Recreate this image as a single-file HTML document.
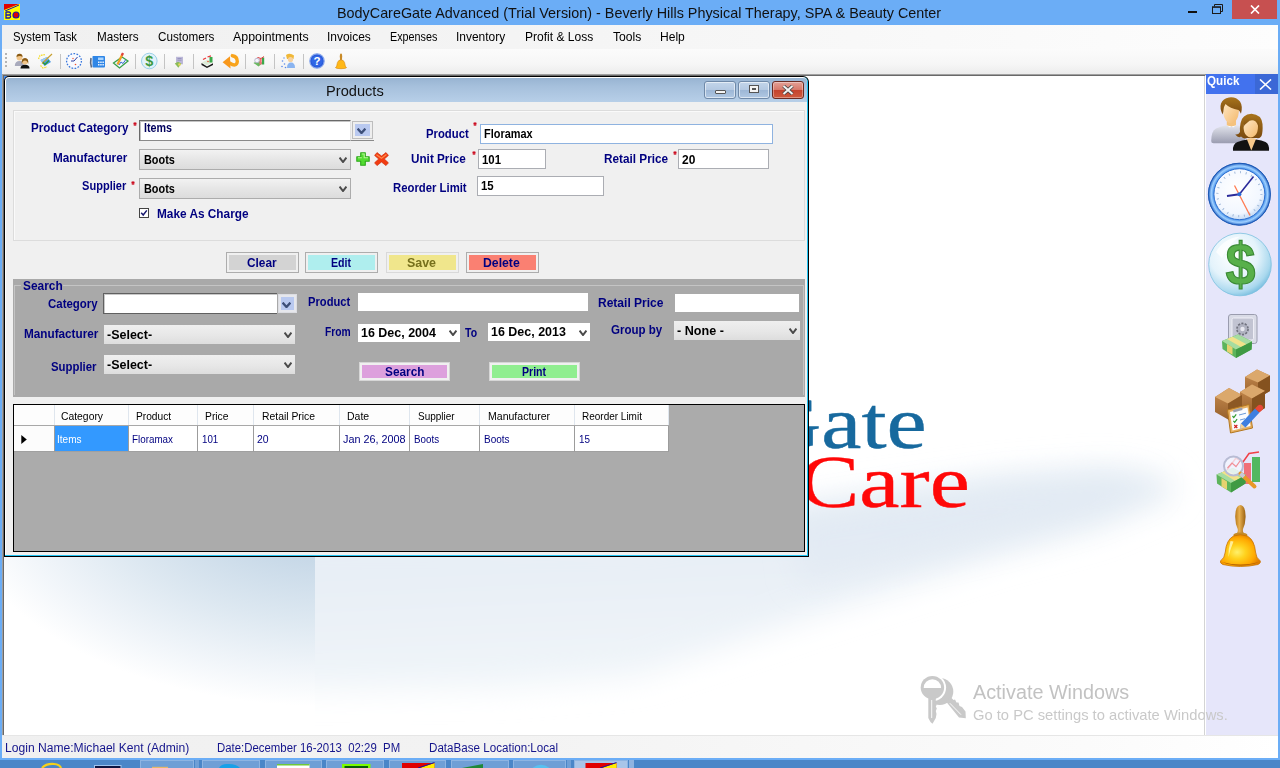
<!DOCTYPE html>
<html lang="en"><head><meta charset="utf-8"><title>BodyCareGate Advanced</title>
<style>

*{box-sizing:border-box}
html,body{margin:0;padding:0}
body{width:1280px;height:768px;overflow:hidden;position:relative;background:#6badf6;font-family:"Liberation Sans",sans-serif;}
.a{position:absolute}
.t{position:absolute;white-space:pre;line-height:1.2;z-index:20;transform-origin:0 0}
#menubar{left:2px;top:25px;width:1276px;height:24px;background:linear-gradient(90deg,#f0f0f0 0,#f4f4f4 40%,#fdfdfd 100%)}
#toolbar{left:2px;top:49px;width:1276px;height:25px;background:linear-gradient(180deg,#fbfbfb 0,#f6f6f6 60%,#ececec 100%)}
#mdi{left:2px;top:74px;width:1204px;height:661px;background:#fff;border-left:2px solid #696969;border-top:2px solid #696969;border-right:1px solid #fff;box-shadow:inset -1px 0 0 #d4d4d4;overflow:hidden}
#mdib{left:2px;top:74px;width:1203px;height:661px;border-left:1px solid #a0a0a0;border-top:1px solid #a0a0a0;z-index:2;pointer-events:none}
#status{left:2px;top:735px;width:1276px;height:23px;background:linear-gradient(90deg,#f0f0f0 0,#f2f2f2 35%,#fbfbfb 85%,#ffffff 100%);border-top:1px solid #e6e6e6}
#taskbar{left:0;top:760px;width:1280px;height:8px;background:#4a86c8;overflow:hidden}
.tsep{position:absolute;top:54px;width:1px;height:15px;background:#c4c4c4}
/* child window */
#win{left:4px;top:76px;width:805px;height:481px;background:#000;border-radius:5px 6px 0 0;z-index:5}
#win .cy{left:1px;top:1px;right:1px;bottom:1px;background:#21c3f2;border-radius:6px 6px 0 0}
#win .in{left:2px;top:2px;right:2px;bottom:2px;background:#f0f0f0;border-radius:3px 4px 0 0;overflow:hidden}
#cap{left:0;top:0;right:0;height:24px;background:linear-gradient(180deg,#98b4d2 0,#a6c0dc 35%,#b7cfe8 100%)}
.cbtn{position:absolute;top:4px;height:18px;border:1px solid #6f89a8;border-radius:3px;background:linear-gradient(180deg,#c3d5ea 0,#b4c9e2 48%,#9db7d6 52%,#b0c8e3 100%);box-shadow:inset 0 0 0 1px rgba(255,255,255,.55)}
.cbtn.x{border-color:#6b2b22;background:linear-gradient(180deg,#e3a197 0,#d8796a 48%,#c4432d 52%,#cf5a3d 100%);box-shadow:inset 0 0 0 1px rgba(255,255,255,.35)}
.tb{position:absolute;background:#fff;border:1px solid #abadb3;z-index:6}
.cmb{position:absolute;border:1px solid #acacac;background:linear-gradient(180deg,#f2f2f2 0,#e6e6e6 50%,#dcdcdc 100%);z-index:6}
.cmb2{position:absolute;background:linear-gradient(180deg,#efefef 0,#e7e7e7 55%,#dddddd 100%);z-index:6}
.btn{position:absolute;border:1px solid #adadad;background:#f0f0f0;z-index:6}
.btn i{position:absolute;left:2px;top:2px;right:2px;bottom:2px}
.chev{position:absolute;z-index:7}

#win .hl{left:1px;top:1px;right:1px;bottom:1px;border-radius:4px 5px 0 0;background:#fff;border-right:1px solid #21c3f2;border-bottom:1px solid #21c3f2}

</style></head>
<body>

<div class="a" id="titlebar" style="left:0;top:0;width:1280px;height:25px">
 <svg class="a" style="left:4px;top:4px" width="16" height="16" viewBox="0 0 16 16">
  <rect width="16" height="16" fill="#ffff00"/><path d="M0 0H15L0 6Z" fill="#e00000"/>
  <path d="M1 7L15 1" stroke="#1a1aa0" stroke-width="1"/>
  <path d="M2 8V14H5.5A1.6 1.6 0 0 0 5.5 11H2M2 11H5A1.5 1.5 0 0 0 5 8H2" fill="none" stroke="#1a1aa0" stroke-width="1.3"/>
  <circle cx="12" cy="11" r="3" fill="#e00000" stroke="#1a1aa0" stroke-width="1.2"/>
 </svg>
 <div class="a" style="left:1188px;top:11px;width:9px;height:2px;background:#111"></div>
 <svg class="a" style="left:1212px;top:4px" width="12" height="11" viewBox="0 0 12 11"><path d="M2.5 2.5V0.5H10.5V7.5H8.5" fill="none" stroke="#1a1a1a" stroke-width="1"/><rect x="0.5" y="3" width="8" height="6.5" fill="none" stroke="#1a1a1a" stroke-width="1"/><rect x="0" y="2.5" width="9" height="1.2" fill="#1a1a1a"/></svg>
 <div class="a" style="left:1232px;top:0;width:45px;height:19px;background:#c75050"></div>
 <svg class="a" style="left:1250px;top:5px" width="10" height="9" viewBox="0 0 10 9"><path d="M1 0.5L9 8.5M9 0.5L1 8.5" stroke="#fff" stroke-width="1.7"/></svg>
</div>
<div class="a" id="menubar"></div>
<div class="a" id="mdib"></div>
<div class="a" id="toolbar"></div>
<div class="a" id="status"></div>
<div class="a" id="taskbar"></div>

<div class="a" id="mdi">
<svg class="a" style="left:-4px;top:-76px" width="1280" height="768" viewBox="0 0 1280 768">
 <defs>
  <filter id="bl2" x="-10%" y="-30%" width="120%" height="160%"><feGaussianBlur stdDeviation="15"/></filter>
  <radialGradient id="gL" cx="0" cy="0" r="1" gradientUnits="userSpaceOnUse" gradientTransform="translate(325 492) scale(370 214)">
   <stop offset="0" stop-color="#bdd2e4"/><stop offset="0.32" stop-color="#c8d9e8"/><stop offset="0.6" stop-color="#dde8f1"/><stop offset="0.85" stop-color="#f2f6fa"/><stop offset="1" stop-color="#ffffff"/>
  </radialGradient>
  <linearGradient id="gW" x1="0" y1="0" x2="0.18" y2="1"><stop offset="0" stop-color="#e3ecf4"/><stop offset="0.5" stop-color="#e8eff6"/><stop offset="1" stop-color="#f0f5f9"/></linearGradient>
  <clipPath id="cR"><rect x="315" y="76" width="889" height="659"/></clipPath>
 </defs>
 <g clip-path="url(#cR)">
  <g filter="url(#bl2)"><path d="M260 530 L640 535 L800 503 L1000 476 L1100 468 L1165 476 L1178 494 L1100 528 L1000 555 L800 620 L640 676 L500 688 L260 690Z" fill="url(#gW)"/></g>
  <g filter="url(#bl2)"><path d="M790 515 L1000 482 L1120 474 L1160 486 L1090 515 L1000 540 L800 585Z" fill="#dde8f2" opacity="0.5"/></g>
 </g>
 <rect x="4" y="400" width="311" height="340" fill="url(#gL)"/>
</svg>
</div>
<div class="a" style="left:4px;top:76px;width:4px;height:4px;background:#4a90f0;z-index:4"></div>
<div class="a" id="win">
 <div class="a hl"></div>
 <div class="a in"><div class="a" id="cap"></div></div>
</div>
<div class="cbtn" style="left:704px;top:81px;width:32px;height:18px;z-index:6"><div class="a" style="left:10px;top:8px;width:11px;height:4px;background:#f4f4f4;border:1px solid #555;border-radius:1px"></div></div>
<div class="cbtn" style="left:738px;top:81px;width:32px;height:18px;z-index:6"><div class="a" style="left:10px;top:3px;width:10px;height:8px;background:#f4f4f4;border:1px solid #555"><div class="a" style="left:2px;top:2px;width:4px;height:2px;border:1px solid #555;background:#9db7d6"></div></div></div>
<div class="cbtn x" style="left:772px;top:81px;width:32px;height:18px;z-index:6"><svg class="a" style="left:9px;top:3px" width="12" height="10" viewBox="0 0 12 10"><path d="M1.5 1L10.5 9M10.5 1L1.5 9" stroke="#444" stroke-width="3.6"/><path d="M1.5 1L10.5 9M10.5 1L1.5 9" stroke="#f4f4f4" stroke-width="2"/></svg></div>
<div class="a" style="left:13px;top:110px;width:792px;height:131px;border:1px solid #dcdcdc;z-index:6;box-shadow:inset 1px 1px 0 #fafafa"></div>
<div class="a" style="left:139px;top:120px;width:212px;height:21px;background:#fff;border:1px solid #e3e3e3;border-top-color:#696969;border-left-color:#696969;border-bottom-color:#8a8a8a;z-index:6;box-shadow:inset 1px 1px 0 #c4c4c4"></div>
<div class="a" style="left:351px;top:140px;width:23px;height:1px;background:#8a8a8a;z-index:6"></div>
<div class="a" style="left:352px;top:121px;width:21px;height:18px;background:#eeeeee;border:1px solid #bdbdbd;z-index:6"><div class="a" style="left:2px;top:2px;right:2px;bottom:2px;background:#b9c9f0"></div></div>
<svg class="chev" style="left:357px;top:128px" width="9" height="6" viewBox="0 0 9 6"><path d="M0.6 0.6 L4.5 5 L8.4 0.6" fill="none" stroke="#3d4f78" stroke-width="2.3"/></svg>
<svg class="a" style="left:133px;top:121.5px;z-index:7" width="4" height="4" viewBox="0 0 4 4"><path d="M2 0.300V3.700M0.500 1.100L3.500 2.900M3.500 1.100L0.500 2.900" stroke="#cc0c20" stroke-width="1.200"/></svg>
<svg class="a" style="left:130.5px;top:180.5px;z-index:7" width="4" height="4" viewBox="0 0 4 4"><path d="M2 0.300V3.700M0.500 1.100L3.500 2.900M3.500 1.100L0.500 2.900" stroke="#cc0c20" stroke-width="1.200"/></svg>
<svg class="a" style="left:473px;top:121.5px;z-index:7" width="4" height="4" viewBox="0 0 4 4"><path d="M2 0.300V3.700M0.500 1.100L3.500 2.900M3.500 1.100L0.500 2.900" stroke="#cc0c20" stroke-width="1.200"/></svg>
<svg class="a" style="left:471.5px;top:151px;z-index:7" width="4" height="4" viewBox="0 0 4 4"><path d="M2 0.300V3.700M0.500 1.100L3.500 2.900M3.500 1.100L0.500 2.900" stroke="#cc0c20" stroke-width="1.200"/></svg>
<svg class="a" style="left:673px;top:150.5px;z-index:7" width="4" height="4" viewBox="0 0 4 4"><path d="M2 0.300V3.700M0.500 1.100L3.500 2.900M3.500 1.100L0.500 2.900" stroke="#cc0c20" stroke-width="1.200"/></svg>
<div class="cmb" style="left:139px;top:149px;width:212px;height:21px;"></div>
<svg class="chev" style="left:338.5px;top:157px" width="8" height="6" viewBox="0 0 8 6"><path d="M0.6 0.6 L4.0 5 L7.4 0.6" fill="none" stroke="#4a4a4a" stroke-width="2"/></svg>
<div class="cmb" style="left:139px;top:178px;width:212px;height:21px;"></div>
<svg class="chev" style="left:338.5px;top:185.7px" width="8" height="6" viewBox="0 0 8 6"><path d="M0.6 0.6 L4.0 5 L7.4 0.6" fill="none" stroke="#4a4a4a" stroke-width="2"/></svg>
<svg class="a" style="left:356px;top:152px;z-index:7" width="14" height="14" viewBox="0 0 14 14"><path d="M4.700 0.800H9.300V4.700H13.200V9.300H9.300V13.200H4.700V9.300H0.800V4.700H4.700Z" fill="#52dc30" stroke="#2fa81c" stroke-width="1.100" stroke-linejoin="round"/><path d="M5.800 2H8.200V5.800H12 M2 5.800H5.800" fill="none" stroke="#b4f594" stroke-width="1.100"/></svg>
<svg class="a" style="left:374px;top:152px;z-index:7" width="15" height="14" viewBox="0 0 15 14"><path d="M3 0.600L7.500 4L12 0.600L14.400 3.400L10.300 7L14.400 10.800L12 13.600L7.500 10L3 13.600L0.600 10.800L4.700 7L0.600 3.400Z" fill="#f23c12" stroke="#d02c08" stroke-width="0.700" stroke-linejoin="round"/><path d="M2.500 2.800L7.500 6.300L12.400 2.600" fill="none" stroke="#ff8a4a" stroke-width="1.200"/></svg>
<div class="a" style="left:139px;top:208px;width:10px;height:10px;background:#fff;border:1px solid #444;z-index:6"><svg class="a" style="left:0;top:0" width="8" height="8" viewBox="0 0 8 8"><path d="M1.2 3.8L3.2 6L6.8 1.4" fill="none" stroke="#1a1a70" stroke-width="1.5"/></svg></div>
<div class="tb" style="left:480px;top:124px;width:293px;height:20px;border-color:#8fb3e0"></div>
<div class="tb" style="left:478px;top:149px;width:68px;height:20px;"></div>
<div class="tb" style="left:678px;top:149px;width:91px;height:20px;"></div>
<div class="tb" style="left:477px;top:176px;width:127px;height:20px;"></div>
<div class="btn" style="left:226px;top:252px;width:73px;height:21px;border-color:#adadad"><i style="background:#d3d3d3;left:2px;top:2px;right:2px;bottom:2px"></i></div>
<div class="btn" style="left:305px;top:252px;width:73px;height:21px;border-color:#adadad"><i style="background:#afeeee;left:2px;top:2px;right:2px;bottom:2px"></i></div>
<div class="btn" style="left:386px;top:252px;width:73px;height:21px;border-color:#d9d9d9"><i style="background:#f0e68c;left:2px;top:2px;right:2px;bottom:2px"></i></div>
<div class="btn" style="left:466px;top:252px;width:73px;height:21px;border-color:#adadad"><i style="background:#fa8072;left:2px;top:2px;right:2px;bottom:2px"></i></div>
<div class="a" style="left:13px;top:279px;width:792px;height:118px;background:#a9a9a9;z-index:6"></div>
<div class="a" style="left:14px;top:285px;width:790px;height:110px;border:1px solid #c4c4c4;border-bottom:none;z-index:6"></div>
<div class="a" style="left:21px;top:283px;width:42px;height:6px;background:#a9a9a9;z-index:6"></div>
<div class="a" style="left:103px;top:293px;width:174px;height:21px;background:#fff;border:1px solid #606060;border-right:none;z-index:6;box-shadow:inset 1px 1px 0 #c8c8c8"></div>
<div class="a" style="left:278px;top:294px;width:19px;height:19px;background:#e6e7ec;border:1px solid #dcdde2;z-index:6"><div class="a" style="left:2px;top:2px;right:2px;bottom:2px;background:#b9c9f0"></div></div>
<svg class="chev" style="left:282px;top:301.7px" width="9" height="6" viewBox="0 0 9 6"><path d="M0.6 0.6 L4.5 5 L8.4 0.6" fill="none" stroke="#3d4f78" stroke-width="2.3"/></svg>
<div class="cmb2" style="left:104px;top:325px;width:191px;height:19px;"></div>
<svg class="chev" style="left:283.7px;top:332.3px" width="8" height="6" viewBox="0 0 8 6"><path d="M0.6 0.6 L4.0 5 L7.4 0.6" fill="none" stroke="#4a4a4a" stroke-width="2"/></svg>
<div class="cmb2" style="left:104px;top:355px;width:191px;height:19px;"></div>
<svg class="chev" style="left:283.7px;top:362.3px" width="8" height="6" viewBox="0 0 8 6"><path d="M0.6 0.6 L4.0 5 L7.4 0.6" fill="none" stroke="#4a4a4a" stroke-width="2"/></svg>
<div class="a" style="left:358px;top:293px;width:230px;height:18px;background:#fff;z-index:6"></div>
<div class="a" style="left:358px;top:324px;width:102px;height:18px;background:#fff;z-index:6"></div>
<svg class="chev" style="left:448.5px;top:330.3px" width="8" height="6" viewBox="0 0 8 6"><path d="M0.6 0.6 L4.0 5 L7.4 0.6" fill="none" stroke="#4a4a4a" stroke-width="2"/></svg>
<div class="a" style="left:488px;top:323px;width:102px;height:18px;background:#fff;z-index:6"></div>
<svg class="chev" style="left:578.5px;top:329.5px" width="8" height="6" viewBox="0 0 8 6"><path d="M0.6 0.6 L4.0 5 L7.4 0.6" fill="none" stroke="#4a4a4a" stroke-width="2"/></svg>
<div class="a" style="left:675px;top:294px;width:124px;height:18px;background:#fff;z-index:6"></div>
<div class="cmb2" style="left:674px;top:321px;width:126px;height:19px;"></div>
<svg class="chev" style="left:788.8px;top:327.5px" width="8" height="6" viewBox="0 0 8 6"><path d="M0.6 0.6 L4.0 5 L7.4 0.6" fill="none" stroke="#4a4a4a" stroke-width="2"/></svg>
<div class="btn" style="left:359px;top:362px;width:91px;height:19px;border-color:#d6d6d6"><i style="background:#dda0dd;left:2px;top:2px;right:2px;bottom:2px"></i></div>
<div class="btn" style="left:489px;top:362px;width:91px;height:19px;border-color:#d6d6d6"><i style="background:#90ee90;left:2px;top:2px;right:2px;bottom:2px"></i></div>
<div class="a" style="left:13px;top:404px;width:792px;height:148px;background:#ababab;border:1px solid #000;z-index:6"></div>
<div class="a" style="left:14px;top:405px;width:655px;height:21px;background:#fdfdfd;z-index:6;border-bottom:1px solid #a8a8a8"></div>
<div class="a" style="left:14px;top:426px;width:655px;height:26px;background:#fff;z-index:6;border-bottom:1px solid #a0a0a0"></div>
<div class="a" style="left:14px;top:426px;width:40px;height:26px;background:#fcfcfc;z-index:6;border-bottom:1px solid #a0a0a0"></div>
<div class="a" style="left:55px;top:426px;width:73px;height:25px;background:#3399ff;z-index:7"></div>
<div class="a" style="left:54px;top:405px;width:1px;height:20px;background:#dfe6ee;z-index:7"></div>
<div class="a" style="left:54px;top:426px;width:1px;height:26px;background:#9c9c9c;z-index:7"></div>
<div class="a" style="left:128px;top:405px;width:1px;height:20px;background:#dfe6ee;z-index:7"></div>
<div class="a" style="left:128px;top:426px;width:1px;height:26px;background:#9c9c9c;z-index:7"></div>
<div class="a" style="left:197px;top:405px;width:1px;height:20px;background:#dfe6ee;z-index:7"></div>
<div class="a" style="left:197px;top:426px;width:1px;height:26px;background:#9c9c9c;z-index:7"></div>
<div class="a" style="left:253px;top:405px;width:1px;height:20px;background:#dfe6ee;z-index:7"></div>
<div class="a" style="left:253px;top:426px;width:1px;height:26px;background:#9c9c9c;z-index:7"></div>
<div class="a" style="left:339px;top:405px;width:1px;height:20px;background:#dfe6ee;z-index:7"></div>
<div class="a" style="left:339px;top:426px;width:1px;height:26px;background:#9c9c9c;z-index:7"></div>
<div class="a" style="left:409px;top:405px;width:1px;height:20px;background:#dfe6ee;z-index:7"></div>
<div class="a" style="left:409px;top:426px;width:1px;height:26px;background:#9c9c9c;z-index:7"></div>
<div class="a" style="left:479px;top:405px;width:1px;height:20px;background:#dfe6ee;z-index:7"></div>
<div class="a" style="left:479px;top:426px;width:1px;height:26px;background:#9c9c9c;z-index:7"></div>
<div class="a" style="left:574px;top:405px;width:1px;height:20px;background:#dfe6ee;z-index:7"></div>
<div class="a" style="left:574px;top:426px;width:1px;height:26px;background:#9c9c9c;z-index:7"></div>
<div class="a" style="left:668px;top:405px;width:1px;height:20px;background:#dfe6ee;z-index:7"></div>
<div class="a" style="left:668px;top:426px;width:1px;height:26px;background:#9c9c9c;z-index:7"></div>
<svg class="a" style="left:20.500px;top:435.300px;z-index:8" width="6" height="9" viewBox="0 0 6 9"><path d="M0.300 0L5.800 4.500L0.300 9Z" fill="#000"/></svg><div class="a" style="left:1206px;top:74px;width:72px;height:661px;background:#e6e6fa;z-index:4"></div>
<div class="a" style="left:1206px;top:74px;width:72px;height:20px;background:#4272ee;z-index:4"></div>
<div class="a" style="left:1255px;top:74px;width:23px;height:20px;background:#3b68d6;z-index:4"></div>
<svg class="a" style="left:1259px;top:79px;z-index:5" width="13" height="11" viewBox="0 0 13 11"><path d="M1 0.5L12 10.5M12 0.5L1 10.5" stroke="#fff" stroke-width="1.6"/></svg>
<svg class="a" style="left:1206px;top:94px;z-index:5" width="72" height="500" viewBox="1206 94 72 500">
<defs>
 <linearGradient id="hair" x1="0" y1="0" x2="0" y2="1"><stop offset="0" stop-color="#a8741c"/><stop offset="1" stop-color="#7a4a10"/></linearGradient>
 <linearGradient id="skin" x1="0" y1="0" x2="1" y2="1"><stop offset="0" stop-color="#ffe9c8"/><stop offset="1" stop-color="#f3b86a"/></linearGradient>
 <linearGradient id="shirt" x1="0" y1="0" x2="0" y2="1"><stop offset="0" stop-color="#e4e6ee"/><stop offset="1" stop-color="#9a9cb0"/></linearGradient>
 <radialGradient id="ring" cx="0.5" cy="0.5" r="0.5"><stop offset="0.8" stop-color="#3d8be8"/><stop offset="0.9" stop-color="#9fd0ff"/><stop offset="1" stop-color="#1a5cc0"/></radialGradient>
 <radialGradient id="face" cx="0.45" cy="0.4" r="0.6"><stop offset="0" stop-color="#ffffff"/><stop offset="0.8" stop-color="#f2f7ff"/><stop offset="1" stop-color="#c8dcf4"/></radialGradient>
 <radialGradient id="bub" cx="0.4" cy="0.35" r="0.7"><stop offset="0" stop-color="#ffffff"/><stop offset="0.55" stop-color="#e4f3fb"/><stop offset="0.85" stop-color="#a9d8ee"/><stop offset="1" stop-color="#6fb9dc"/></radialGradient>
 <radialGradient id="bell" cx="0.42" cy="0.55" r="0.6"><stop offset="0" stop-color="#fff06a"/><stop offset="0.35" stop-color="#ffd21e"/><stop offset="0.75" stop-color="#ffa800"/><stop offset="1" stop-color="#e07e00"/></radialGradient>
 <linearGradient id="wood" x1="0" y1="0" x2="1" y2="0"><stop offset="0" stop-color="#b87818"/><stop offset="0.4" stop-color="#e8b050"/><stop offset="1" stop-color="#9a6010"/></linearGradient>
 <linearGradient id="boxf" x1="0" y1="0" x2="0" y2="1"><stop offset="0" stop-color="#c88c50"/><stop offset="1" stop-color="#96602c"/></linearGradient>
</defs>
<!-- people -->
<g>
 <path d="M1211.200 141 Q1211.200 131 1216 128.500 Q1221 126 1227 125 H1236 Q1242 126 1245 128 V143.300 H1213.500 Q1211.200 143.300 1211.200 141Z" fill="url(#shirt)"/>
 <path d="M1226.500 125 L1230 127.600 L1231.500 125.800 L1233 127.600 L1236.500 125Z" fill="#fbfbfd"/>
 <path d="M1226.800 117 H1236 V125.300 Q1231.400 127 1226.800 125.300Z" fill="#f4c27e"/>
 <path d="M1223 108 Q1223 101 1231 101 Q1239 101 1239 108 Q1239 117 1236 120.500 Q1233.500 123.300 1231 123.300 Q1228.500 123.300 1226 120.500 Q1223 117 1223 108Z" fill="url(#skin)"/>
 <path d="M1222.500 114.500 Q1219.500 108 1221 103.500 Q1223 98.500 1229 97.400 Q1236 96.500 1240 101.500 Q1243 106 1241 113.700 Q1239.500 110.500 1238.500 110 Q1230 108.500 1225.500 104 Q1223.500 107 1223.500 110 Q1223.500 112.500 1222.500 114.500Z" fill="url(#hair)"/>
 <path d="M1233 150.750 Q1232.500 144 1237.500 142 Q1242 140.200 1247.500 139.500 H1256 Q1262 140.200 1265.500 142 Q1269.500 144 1269 150.750Z" fill="#121212"/>
 <path d="M1246.800 139 L1251.300 150.500 L1256 139 Q1251.400 137 1246.800 139Z" fill="#f6c88a"/>
 <path d="M1241 136.500 Q1238.500 138.500 1235.200 134.500 Q1238.500 135 1240 132 Q1239.500 128 1240.600 123 Q1242 114.500 1251.500 113.800 Q1261.500 114.500 1262.500 124 Q1263 132 1261.500 136 Q1259.500 139 1257 138 H1247 Q1244 139.500 1241 136.500Z" fill="url(#hair)"/>
 <path d="M1243.500 126 Q1243.500 119.500 1251 119.500 Q1258 119.500 1258 126 Q1258 133 1255 135.500 Q1253 137.400 1250.800 137.400 Q1248.500 137.400 1246.500 135.500 Q1243.500 133 1243.500 126Z" fill="url(#skin)"/>
 <path d="M1243.300 127.500 Q1242.500 117.500 1251.500 116 Q1260 116.500 1259 128 Q1257.500 122 1254 120.500 Q1250 119.500 1247.500 122.500 Q1245 124 1243.300 127.500Z" fill="url(#hair)"/>
</g>
<!-- clock -->
<g>
 <circle cx="1239.400" cy="194.200" r="31.300" fill="url(#ring)"/>
 <circle cx="1239.400" cy="194.200" r="31" fill="none" stroke="#1c58b4" stroke-width="1"/>
 <circle cx="1239.400" cy="194.200" r="25.500" fill="url(#face)" stroke="#2d6fd0" stroke-width="1"/>
 <circle cx="1239.400" cy="194.200" r="22" fill="none" stroke="#9ab4d6" stroke-width="2.200" stroke-dasharray="0.900 4.860"/>
 <path d="M1239.400 194.200 L1253.500 176.500" stroke="#2a2a9a" stroke-width="1.600"/>
 <path d="M1239.400 194.200 L1227 196" stroke="#2a2a9a" stroke-width="2"/>
 <path d="M1234.500 185.500 L1250 215.500" stroke="#ff7a50" stroke-width="1.300"/>
 <circle cx="1239.400" cy="194.200" r="2" fill="#2a6ad8"/>
</g>
<!-- dollar bubble -->
<g>
 <circle cx="1240" cy="264.500" r="31.300" fill="url(#bub)" stroke="#7cc0e0" stroke-width="0.800"/>
 <path d="M1216 252 Q1224 238 1240 236.500 Q1228 244 1222 258Z" fill="#ffffff" opacity=".7"/>
 <text x="1240.5" y="284.5" font-family="'Liberation Sans',sans-serif" font-weight="700" font-size="59" textLength="30" lengthAdjust="spacingAndGlyphs" text-anchor="middle" fill="#58b04a" stroke="#3a8a34" stroke-width="1.200">$</text>
</g>
<!-- safe + money -->
<g>
 <rect x="1228.500" y="314.500" width="28.500" height="29" rx="2.500" fill="#d9dbe6" stroke="#9a9cae" stroke-width="1"/>
 <rect x="1232" y="318" width="21.500" height="22" rx="1.500" fill="#c2c4d2" stroke="#eeeef6" stroke-width="1"/>
 <circle cx="1242.500" cy="329" r="5.600" fill="#b0b2c0" stroke="#70727e" stroke-width="1.600" stroke-dasharray="2.200 1.300"/>
 <circle cx="1242.500" cy="329" r="2.200" fill="#e8e8f0"/>
 <path d="M1222 341 L1238 334.500 L1252 341.500 L1251.500 349.500 L1236 358 L1222.500 349Z" fill="#5db45c"/>
 <path d="M1222 341 L1238 334.500 L1252 341.500 L1236 349.500Z" fill="#a6dca0"/>
 <path d="M1227 339 L1232.500 336.700 L1246.500 344.200 L1241 347Z" fill="#f2e28a"/>
 <path d="M1236 349.500 L1236 358 L1251.500 349.500 L1252 341.500Z" fill="#3f9a44"/>
 <path d="M1227 344 L1232.500 347.300 V354.800 L1227 351.400Z" fill="#e6d270"/>
</g>
<!-- boxes + clipboard -->
<g>
 <path d="M1245 377 L1257 369.500 L1270 375.500 V391 L1258 398 L1245 392Z" fill="url(#boxf)"/>
 <path d="M1245 377 L1257 369.500 L1270 375.500 L1258 382.500Z" fill="#dba86c"/>
 <path d="M1258 382.500 V398 L1270 391 V375.500Z" fill="#85521f"/>
 <path d="M1215 397 L1229 388 L1242 395 V412 L1229 420 L1215 412Z" fill="url(#boxf)"/>
 <path d="M1215 397 L1229 388 L1242 395 L1228 403.500Z" fill="#dba86c"/>
 <path d="M1240 392 L1252 384.500 L1265 391 V408 L1252 416 L1240 409Z" fill="url(#boxf)"/>
 <path d="M1240 392 L1252 384.500 L1265 391 L1252 398.500Z" fill="#dba86c"/>
 <path d="M1252 398.500 V416 L1265 408 V391Z" fill="#85521f"/>
 <path d="M1228 403.500 V420 L1242 412 V395Z" fill="#8c5824"/>
 <path d="M1227.500 410 L1249 404.500 L1252.500 428 L1230.500 433Z" fill="#e8b060" stroke="#b47820" stroke-width="1"/>
 <path d="M1230 412 L1247.500 407.500 L1250.500 426 L1232.500 430.500Z" fill="#fafcff"/>
 <path d="M1233 410 L1242 407.500 L1242.500 410 L1233.500 412.500Z" fill="#9aa0b0"/>
 <path d="M1232.500 416 l1.300 1.600 l2.400 -3.200 M1233.400 420.800 l1.300 1.600 l2.400 -3.200" fill="none" stroke="#2e9a2e" stroke-width="1.200"/>
 <path d="M1234.300 425 l3 3 M1237.300 425 l-3 3" fill="none" stroke="#d02020" stroke-width="1.200"/>
 <path d="M1239 415 l7 -1.800 M1240 420 l5 -1.300" stroke="#6a9ad8" stroke-width="1"/>
 <path d="M1241 423.500 L1255 408.500 L1259.500 412.500 L1245.500 427.500 L1240 428.500Z" fill="#3f7fe0"/>
 <path d="M1255 408.500 L1258 405.500 Q1260.500 404 1262.500 406 Q1264 408 1262.500 409.800 L1259.500 412.500Z" fill="#e84838"/>
 <path d="M1241 423.500 L1245.500 427.500 L1240 428.500Z" fill="#f4d29a"/>
</g>
<!-- magnifier / chart / money -->
<g>
 <rect x="1244" y="463" width="7" height="21" fill="#f07078"/>
 <rect x="1252" y="457" width="8" height="25" fill="#52b860"/>
 <path d="M1227 470 L1236 458 L1243 462 L1249 453.500 L1259 452" fill="none" stroke="#f04048" stroke-width="1.500"/>
 <path d="M1216.500 474.500 L1233 468 L1246 475 L1245.500 483.500 L1231 492.500 L1217 483.500Z" fill="#5db45c"/>
 <path d="M1216.500 474.500 L1233 468 L1246 475 L1231 483Z" fill="#a6dca0"/>
 <path d="M1221.500 472.500 L1227 470.200 L1240.500 477.800 L1235 480.800Z" fill="#f2e28a"/>
 <path d="M1231 483 V492.500 L1245.500 483.500 L1246 475Z" fill="#3f9a44"/>
 <path d="M1221.500 478 L1227 481.500 V489.800 L1221.500 486.400Z" fill="#e6d270"/>
 <circle cx="1233.500" cy="466" r="9.500" fill="#f4f6ff" fill-opacity=".8" stroke="#b8bcd4" stroke-width="2"/>
 <path d="M1227.500 468 L1232 463 L1236 466.500 L1240 461" fill="none" stroke="#f09098" stroke-width="1.200"/>
 <path d="M1240.500 473.500 L1254.500 486.500" stroke="#e89828" stroke-width="4" stroke-linecap="round"/>
 <path d="M1240.500 473.500 L1244 476.800" stroke="#c8c8d8" stroke-width="4"/>
</g>
<!-- bell -->
<g>
 <path d="M1240.400 505 Q1245.800 506 1245.600 517 Q1245.400 524 1243 529 Q1242.500 531.500 1244 533.500 H1236.800 Q1238.200 531.500 1237.700 529 Q1235.300 524 1235.200 517 Q1235 506 1240.400 505Z" fill="url(#wood)"/>
 <ellipse cx="1240.400" cy="535" rx="7" ry="2.600" fill="#c48a28"/>
 <path d="M1233.500 536 Q1240.400 533.500 1247.300 536 Q1254.500 540 1255.500 552 Q1256 558 1260.300 561 Q1261 563 1258 564.500 Q1240.400 568.500 1222.800 564.500 Q1219.800 563 1220.500 561 Q1224.800 558 1225.300 552 Q1226.300 540 1233.500 536Z" fill="url(#bell)" stroke="#c87400" stroke-width="0.800"/>
 <path d="M1230.500 541 Q1228 549 1228.500 557 Q1230 550 1233.500 541.500Z" fill="#fff6b0" opacity=".85"/>
 <path d="M1222 562 Q1240.400 567 1259 562 Q1240.400 569.500 1222 562Z" fill="#b86400"/>
</g>
</svg><div class="tsep" style="left:60px"></div>
<div class="tsep" style="left:135px"></div>
<div class="tsep" style="left:164px"></div>
<div class="tsep" style="left:193px"></div>
<div class="tsep" style="left:245px"></div>
<div class="tsep" style="left:274px"></div>
<div class="tsep" style="left:303px"></div>
<svg class="a" style="left:5px;top:53px" width="3" height="15" viewBox="0 0 3 15"><g fill="#b4b4b4"><rect y="0" width="2" height="2"/><rect y="4" width="2" height="2"/><rect y="8" width="2" height="2"/><rect y="12" width="2" height="2"/></g></svg>
<svg class="a" style="left:0;top:49px" width="360" height="25" viewBox="0 49 360 25">
<!-- people -->
<g><circle cx="19.500" cy="57.500" r="3" fill="#f2c68a"/><path d="M16.500 57 Q16.500 53.500 19.800 53.700 Q22.800 54 22.500 57 Q20 55 16.500 57Z" fill="#8a5a14"/><path d="M14.800 66 Q15 61 19.500 61 Q23.500 61 24 66Z" fill="#a8aabc"/>
<circle cx="25" cy="61.500" r="3" fill="#f2c68a"/><path d="M21.800 64 Q21 58 25 58 Q29 58 28.200 64 Q27.500 60.500 25 60.500 Q22.500 60.500 21.800 64Z" fill="#8a5a14"/><path d="M20.500 68.500 Q20.500 64.800 25 64.800 Q29.500 64.800 29.500 68.500Z" fill="#101010"/></g>
<!-- edit doc -->
<g><path d="M40.500 60 L47 57 L51 62 L44.500 66Z" fill="#4c9ae6"/><path d="M40.500 60 L47 57 L48.500 59 L42 62Z" fill="#9ccaf4"/><path d="M38.500 59 L40 55.500 L45 54.500 M40.500 65.500 L43 68 L47 67" fill="none" stroke="#f4dc30" stroke-width="1.300" stroke-dasharray="1.600 0.800"/><path d="M42 63.500 L52 54" stroke="#c8a030" stroke-width="1.200"/><path d="M43 62.500 l2 2 l4 -4" fill="none" stroke="#2a9a3a" stroke-width="1.300"/></g>
<!-- clock -->
<g><circle cx="74" cy="61" r="7.400" fill="#f8faff" stroke="#3b78dc" stroke-width="1.300" stroke-dasharray="1.700 1.400"/><path d="M74 61 L77.500 57 M74 61 H71" stroke="#3040a0" stroke-width="1"/><circle cx="75.500" cy="64.500" r="0.800" fill="#f05030"/><circle cx="73" cy="58.500" r="0.700" fill="#f05030"/></g>
<!-- phone -->
<g><path d="M93 56 H104 Q105 56 105 57 V66.500 Q105 67.500 104 67.500 H93.500 Q92.500 67.500 92.500 66.500 V57 Q92.500 56 93 56Z" fill="#2f86e6"/><path d="M91 58 Q90 63 91.500 67.500" fill="none" stroke="#5a6a84" stroke-width="1.600"/><rect x="98" y="57.500" width="5.500" height="2.500" fill="#a8d4ff"/><g fill="#e8f2ff"><rect x="98" y="61.500" width="1.500" height="1.500"/><rect x="100.200" y="61.500" width="1.500" height="1.500"/><rect x="102.400" y="61.500" width="1.500" height="1.500"/><rect x="98" y="64" width="1.500" height="1.500"/><rect x="100.200" y="64" width="1.500" height="1.500"/><rect x="102.400" y="64" width="1.500" height="1.500"/></g></g>
<!-- chart/pencil -->
<g><path d="M113.500 63 L122 57 L128 61 L119.500 68Z" fill="#eef6ff" stroke="#38a048" stroke-width="1.300"/><path d="M117.500 64.500 L122.500 54" stroke="#f0a020" stroke-width="2.200"/><path d="M121.800 55.500 L123 53" stroke="#e04040" stroke-width="2.200"/><path d="M119 65 l2 -3 l2 1.500 l2.500 -3.500" fill="none" stroke="#3a6ad0" stroke-width="1"/></g>
<!-- dollar -->
<g><circle cx="149.300" cy="61" r="7.800" fill="#e2f2fa" stroke="#9ad0e8" stroke-width="1"/><text x="149.300" y="66.200" font-family="'Liberation Sans',sans-serif" font-weight="700" font-size="14.500" text-anchor="middle" fill="#3f9a3f">$</text></g>
<!-- small doc/green -->
<g><rect x="176" y="56.800" width="7" height="7.500" fill="#bcb8d8"/><path d="M177.500 58.500 h4 M177.500 60.200 h4" stroke="#8e8ab8" stroke-width="0.800"/><path d="M174.800 63.500 L178 61.800 L181.500 63.500 L178.300 67.800Z" fill="#8cbc58"/><circle cx="179.500" cy="64.500" r="1.300" fill="#e8d860"/></g>
<!-- money box -->
<g><path d="M201.500 63 L207 66.500 L213 63.300 L213 65 L207 68 L201.500 65Z" fill="#181818"/><path d="M202 62.500 L207.500 59.800 L212.500 62 L207 65.500Z" fill="#dcecd8"/><path d="M209.500 57 h3 v5.500 h-3Z" fill="#3aa84a"/><path d="M203 59.500 L206 58 M207.500 57 L211 55.800" fill="none" stroke="#e83838" stroke-width="1.300"/><circle cx="208" cy="61.500" r="0.800" fill="#e85030"/></g>
<!-- orange arrow -->
<g><path d="M229.500 63 Q236.500 67.500 237.300 61.500 Q237.300 56.500 232.300 55.800" fill="none" stroke="#f8a41c" stroke-width="3.400" stroke-linecap="round"/><path d="M222.600 62.300 L230 56.300 L230.500 68.600Z" fill="#f8981c"/><path d="M231.800 54.300 l0.100 0" stroke="#f8b040" stroke-width="1.200" stroke-linecap="round"/></g>
<!-- money chart -->
<g><path d="M253.500 63 L258 60.500 L263 63 L258.500 66.500Z" fill="#6ab860"/><rect x="259.500" y="58.500" width="2.200" height="6" fill="#f07078"/><rect x="262" y="57.500" width="2.200" height="7" fill="#3aa84a"/><path d="M255 60 L258 57.500 L261 58.500 L264 56.500" fill="none" stroke="#e04040" stroke-width="1"/><circle cx="257" cy="60.500" r="2.300" fill="#f4f4fc" stroke="#b0b0c8" stroke-width="0.800"/></g>
<!-- person snow -->
<g><path d="M286 55 Q290 52.500 294 55.500 L293.500 59 H287Z" fill="#f0b838"/><circle cx="290.500" cy="59.500" r="2.600" fill="#f6d2a0"/><path d="M287 68 Q287 62.500 291 62.500 Q295 62.500 295 68Z" fill="#8ab4f0"/><g fill="#5a8ae8"><circle cx="282.500" cy="61" r="0.800"/><circle cx="284.500" cy="64" r="0.800"/><circle cx="282" cy="66.500" r="0.800"/><circle cx="285.500" cy="67.500" r="0.800"/><circle cx="284" cy="58" r="0.700"/></g></g>
<!-- help -->
<g><circle cx="317" cy="61" r="7.200" fill="#2858d8" stroke="#86a6ec" stroke-width="1.200"/><circle cx="317" cy="61" r="5.600" fill="#2f66e6"/><text x="317" y="65.300" font-family="'Liberation Sans',sans-serif" font-weight="700" font-size="11.500" text-anchor="middle" fill="#fff">?</text></g>
<!-- bell -->
<g><path d="M341 53.200 Q342.300 53.500 342.200 56.500 L341.900 60 H340.100 L339.800 56.500 Q339.700 53.500 341 53.200Z" fill="#c88a28"/><path d="M339 60.300 H343 Q345 62 345.200 65.500 Q345.500 67 346.500 67.600 Q346.500 68.600 341 68.700 Q335.500 68.600 335.500 67.600 Q336.500 67 336.800 65.500 Q337 62 339 60.300Z" fill="#ffb818" stroke="#d88400" stroke-width="0.600"/></g>
</svg><div class="a" style="left:140px;top:760px;width:54px;height:8px;background:#6f9fd6;border:1px solid #8db4e2;border-bottom:none;z-index:3"></div>
<div class="a" style="left:202px;top:760px;width:58px;height:8px;background:#6f9fd6;border:1px solid #8db4e2;border-bottom:none;z-index:3"></div>
<div class="a" style="left:265px;top:760px;width:57px;height:8px;background:#6f9fd6;border:1px solid #8db4e2;border-bottom:none;z-index:3"></div>
<div class="a" style="left:326px;top:760px;width:58px;height:8px;background:#6f9fd6;border:1px solid #8db4e2;border-bottom:none;z-index:3"></div>
<div class="a" style="left:389px;top:760px;width:57px;height:8px;background:#6f9fd6;border:1px solid #8db4e2;border-bottom:none;z-index:3"></div>
<div class="a" style="left:451px;top:760px;width:58px;height:8px;background:#6f9fd6;border:1px solid #8db4e2;border-bottom:none;z-index:3"></div>
<div class="a" style="left:513px;top:760px;width:53px;height:8px;background:#6f9fd6;border:1px solid #8db4e2;border-bottom:none;z-index:3"></div>
<div class="a" style="left:574px;top:760px;width:54px;height:8px;background:#a9c5e8;border:1px solid #8db4e2;border-bottom:none;z-index:3"></div>
<div class="a" style="left:629px;top:760px;width:5px;height:8px;background:#8fb3e0;z-index:3"></div>
<div class="a" style="left:195px;top:760px;width:4px;height:8px;background:#6f9fd6;z-index:3"></div>
<div class="a" style="left:567px;top:760px;width:4px;height:8px;background:#6f9fd6;z-index:3"></div>
<svg class="a" style="left:0;top:760px;z-index:4" width="640" height="8" viewBox="0 760 640 8">
<path d="M42 768 Q46 763.500 54 764 Q60 764.500 61 768" fill="none" stroke="#f6d018" stroke-width="2.200"/>
<rect x="94.500" y="765.500" width="26.500" height="4" fill="#0c1440" stroke="#9ec4f0" stroke-width="1"/>
<rect x="152" y="766.800" width="16" height="2" fill="#e8b868"/>
<path d="M219 768 Q221 764 227 764 Q236 763.500 240 768Z" fill="#18a0e8"/>
<rect x="277" y="764" width="32.500" height="5" fill="#fff"/><rect x="277" y="764" width="32.500" height="1.500" fill="#70c838"/>
<rect x="342" y="764" width="28.500" height="5" fill="#7cfc00"/><rect x="344.500" y="766" width="23.500" height="3" fill="#0a5a0a"/>
<rect x="402" y="763" width="32.500" height="6" fill="#e00000"/><path d="M434.500 763 L434.500 768 L420 768Z" fill="#ffee00"/><path d="M418 768 L434.500 762.500" stroke="#1a1aa0" stroke-width="1"/>
<path d="M462 768 L483 764 V768Z" fill="#208838"/>
<path d="M532.500 768 Q541 761.500 549.500 768Z" fill="#58c0f0"/>
<rect x="585.500" y="763" width="31" height="6" fill="#e00000"/><path d="M616.500 763 L616.500 768 L602 768Z" fill="#ffee00"/><path d="M600 768 L616.500 762.500" stroke="#1a1aa0" stroke-width="1"/>
</svg><svg class="a" style="left:912px;top:668px;z-index:30" width="64" height="64" viewBox="912 668 64 64">
<g fill="#c9c9c9">
 <circle cx="939.800" cy="691.500" r="13.500"/>
 <path d="M946 701.500 L950.500 697 L953.500 700 L955 699.500 L956.500 702.500 L958.500 702.500 L959.500 706 L962 707 L965.500 711.500 L965.800 718.200 L959 717.500 Z"/>
</g>
<circle cx="932.400" cy="687.600" r="13.700" fill="#fff"/>
<path d="M949.800 703.200 L961 714.700" stroke="#fff" stroke-width="0.900"/>
<g fill="#c9c9c9">
 <circle cx="932.400" cy="687.600" r="11.700"/>
 <path d="M928.300 697 H935.800 V703 L936.800 704.500 L935.800 706.500 L936.800 708.500 L935.800 711 L936.500 714 L935.800 718 L932.500 723.800 L930.500 722 L928.300 718Z"/>
</g>
<path d="M923.700 688 A8.700 8.700 0 0 1 941.100 688Z" fill="#fff"/>
<path d="M931.700 700 V718" stroke="#fff" stroke-width="0.900"/>
</svg>
<span class="t" style="left:336.52px;top:5.00px;font-size:14.6px;color:#111;transform:scaleX(0.9846);">BodyCareGate Advanced (Trial Version) - Beverly Hills Physical Therapy, SPA &amp; Beauty Center</span>
<span class="t" style="left:13.00px;top:30.00px;font-size:12.3px;color:#000;transform:scaleX(0.9213);">System Task</span>
<span class="t" style="left:96.55px;top:30.00px;font-size:12.3px;color:#000;transform:scaleX(0.9511);">Masters</span>
<span class="t" style="left:157.50px;top:30.00px;font-size:12.3px;color:#000;transform:scaleX(0.9494);">Customers</span>
<span class="t" style="left:233.30px;top:30.00px;font-size:12.3px;color:#000;transform:scaleX(1.0061);">Appointments</span>
<span class="t" style="left:327.33px;top:30.00px;font-size:12.3px;color:#000;transform:scaleX(0.9713);">Invoices</span>
<span class="t" style="left:389.52px;top:30.00px;font-size:12.3px;color:#000;transform:scaleX(0.8760);">Expenses</span>
<span class="t" style="left:455.63px;top:30.00px;font-size:12.3px;color:#000;transform:scaleX(0.9716);">Inventory</span>
<span class="t" style="left:524.52px;top:30.00px;font-size:12.3px;color:#000;transform:scaleX(0.9787);">Profit &amp; Loss</span>
<span class="t" style="left:612.50px;top:30.00px;font-size:12.3px;color:#000;transform:scaleX(0.9875);">Tools</span>
<span class="t" style="left:659.62px;top:30.00px;font-size:12.3px;color:#000;transform:scaleX(0.9815);">Help</span>
<span class="t" style="left:326.42px;top:82.80px;font-size:14.9px;color:#111;transform:scaleX(0.9822);">Products</span>
<span class="t" style="left:31.30px;top:121.30px;font-size:12.4px;font-weight:700;color:#000080;transform:scaleX(0.9369);">Product Category</span>
<span class="t" style="left:52.80px;top:151.30px;font-size:12.4px;font-weight:700;color:#000080;transform:scaleX(0.9458);">Manufacturer</span>
<span class="t" style="left:81.90px;top:178.80px;font-size:12.4px;font-weight:700;color:#000080;transform:scaleX(0.8925);">Supplier</span>
<span class="t" style="left:156.90px;top:207.00px;font-size:12.4px;font-weight:700;color:#000080;transform:scaleX(0.9542);">Make As Charge</span>
<span class="t" style="left:426.40px;top:127.40px;font-size:12.4px;font-weight:700;color:#000080;transform:scaleX(0.9125);">Product</span>
<span class="t" style="left:410.90px;top:152.00px;font-size:12.4px;font-weight:700;color:#000080;transform:scaleX(0.9457);">Unit Price</span>
<span class="t" style="left:604.00px;top:152.00px;font-size:12.4px;font-weight:700;color:#000080;transform:scaleX(0.9496);">Retail Price</span>
<span class="t" style="left:392.80px;top:181.30px;font-size:12.4px;font-weight:700;color:#000080;transform:scaleX(0.9139);">Reorder Limit</span>
<span class="t" style="left:144.40px;top:121.00px;font-size:12.4px;font-weight:700;color:#00005c;transform:scaleX(0.8652);">Items</span>
<span class="t" style="left:143.80px;top:152.80px;font-size:12.4px;font-weight:700;color:#000;transform:scaleX(0.8775);">Boots</span>
<span class="t" style="left:143.80px;top:181.80px;font-size:12.4px;font-weight:700;color:#000;transform:scaleX(0.8775);">Boots</span>
<span class="t" style="left:484.10px;top:127.00px;font-size:12.4px;font-weight:700;color:#000;transform:scaleX(0.8822);">Floramax</span>
<span class="t" style="left:481.80px;top:152.60px;font-size:12.4px;font-weight:700;color:#000;transform:scaleX(0.9191);">101</span>
<span class="t" style="left:681.60px;top:152.60px;font-size:12.4px;font-weight:700;color:#000;transform:scaleX(0.9646);">20</span>
<span class="t" style="left:481.40px;top:179.20px;font-size:12.4px;font-weight:700;color:#000;transform:scaleX(0.9215);">15</span>
<span class="t" style="left:246.90px;top:255.00px;font-size:13.2px;font-weight:700;color:#000080;transform:scaleX(0.8979);">Clear</span>
<span class="t" style="left:330.90px;top:255.00px;font-size:13.2px;font-weight:700;color:#000080;transform:scaleX(0.8034);">Edit</span>
<span class="t" style="left:407.40px;top:255.00px;font-size:13.2px;font-weight:700;color:#77701c;transform:scaleX(0.9421);">Save</span>
<span class="t" style="left:483.40px;top:255.00px;font-size:13.2px;font-weight:700;color:#000080;transform:scaleX(0.9274);">Delete</span>
<span class="t" style="left:22.60px;top:279.00px;font-size:12.4px;font-weight:700;color:#000080;transform:scaleX(0.9593);">Search</span>
<span class="t" style="left:47.90px;top:296.90px;font-size:12.4px;font-weight:700;color:#000080;transform:scaleX(0.9235);">Category</span>
<span class="t" style="left:23.80px;top:327.30px;font-size:12.4px;font-weight:700;color:#000080;transform:scaleX(0.9470);">Manufacturer</span>
<span class="t" style="left:50.70px;top:359.90px;font-size:12.4px;font-weight:700;color:#000080;transform:scaleX(0.9187);">Supplier</span>
<span class="t" style="left:107.00px;top:328.30px;font-size:12.4px;font-weight:700;color:#000;transform:scaleX(1.0082);">-Select-</span>
<span class="t" style="left:107.00px;top:358.30px;font-size:12.4px;font-weight:700;color:#000;transform:scaleX(1.0082);">-Select-</span>
<span class="t" style="left:307.90px;top:295.00px;font-size:12.4px;font-weight:700;color:#000080;transform:scaleX(0.9018);">Product</span>
<span class="t" style="left:324.80px;top:325.00px;font-size:12.4px;font-weight:700;color:#000080;transform:scaleX(0.8301);">From</span>
<span class="t" style="left:360.60px;top:326.00px;font-size:12.4px;font-weight:700;color:#000;transform:scaleX(1.0065);">16 Dec, 2004</span>
<span class="t" style="left:465.40px;top:326.00px;font-size:12.4px;font-weight:700;color:#000080;transform:scaleX(0.8465);">To</span>
<span class="t" style="left:490.70px;top:325.00px;font-size:12.4px;font-weight:700;color:#000;transform:scaleX(1.0065);">16 Dec, 2013</span>
<span class="t" style="left:597.60px;top:296.00px;font-size:12.4px;font-weight:700;color:#000080;transform:scaleX(0.9704);">Retail Price</span>
<span class="t" style="left:611.00px;top:322.50px;font-size:12.4px;font-weight:700;color:#000080;transform:scaleX(0.9297);">Group by</span>
<span class="t" style="left:677.00px;top:324.00px;font-size:12.4px;font-weight:700;color:#000;transform:scaleX(1.0155);">- None -</span>
<span class="t" style="left:384.50px;top:363.80px;font-size:13.2px;font-weight:700;color:#000080;transform:scaleX(0.8969);">Search</span>
<span class="t" style="left:521.60px;top:363.80px;font-size:13.2px;font-weight:700;color:#000080;transform:scaleX(0.8027);">Print</span>
<span class="t" style="left:61.30px;top:409.20px;font-size:11.6px;color:#000;transform:scaleX(0.8932);">Category</span>
<span class="t" style="left:136.20px;top:409.20px;font-size:11.6px;color:#000;transform:scaleX(0.8789);">Product</span>
<span class="t" style="left:205.20px;top:409.20px;font-size:11.6px;color:#000;transform:scaleX(0.8896);">Price</span>
<span class="t" style="left:261.50px;top:409.20px;font-size:11.6px;color:#000;transform:scaleX(0.8941);">Retail Price</span>
<span class="t" style="left:347.30px;top:409.20px;font-size:11.6px;color:#000;transform:scaleX(0.9026);">Date</span>
<span class="t" style="left:417.60px;top:409.20px;font-size:11.6px;color:#000;transform:scaleX(0.8600);">Supplier</span>
<span class="t" style="left:487.50px;top:409.20px;font-size:11.6px;color:#000;transform:scaleX(0.9088);">Manufacturer</span>
<span class="t" style="left:582.30px;top:409.20px;font-size:11.6px;color:#000;transform:scaleX(0.8612);">Reorder Limit</span>
<span class="t" style="left:57.43px;top:431.90px;font-size:11.6px;color:#fff;transform:scaleX(0.8676);">Items</span>
<span class="t" style="left:132.20px;top:431.90px;font-size:11.6px;color:#000080;transform:scaleX(0.8471);">Floramax</span>
<span class="t" style="left:201.80px;top:431.90px;font-size:11.6px;color:#000080;transform:scaleX(0.8415);">101</span>
<span class="t" style="left:257.00px;top:431.90px;font-size:11.6px;color:#000080;transform:scaleX(0.8998);">20</span>
<span class="t" style="left:342.70px;top:431.90px;font-size:11.6px;color:#000080;transform:scaleX(0.9340);">Jan 26, 2008</span>
<span class="t" style="left:413.70px;top:431.90px;font-size:11.6px;color:#000080;transform:scaleX(0.8442);">Boots</span>
<span class="t" style="left:483.50px;top:431.90px;font-size:11.6px;color:#000080;transform:scaleX(0.8643);">Boots</span>
<span class="t" style="left:578.90px;top:431.90px;font-size:11.6px;color:#000080;transform:scaleX(0.8515);">15</span>
<span class="t" style="left:5.32px;top:741.20px;font-size:12.3px;color:#15158c;transform:scaleX(0.9840);">Login Name:Michael Kent (Admin)</span>
<span class="t" style="left:217.07px;top:741.20px;font-size:12.3px;color:#15158c;transform:scaleX(0.9272);">Date:December 16-2013  02:29  PM</span>
<span class="t" style="left:429.06px;top:741.20px;font-size:12.3px;color:#15158c;transform:scaleX(0.9445);">DataBase Location:Local</span>
<span class="t" style="left:1207.40px;top:73.70px;font-size:12.2px;font-weight:700;color:#fff;transform:scaleX(0.9563);">Quick</span>
<span class="t" style="left:973.20px;top:681.00px;font-size:19.6px;color:#c2c2c2;transform:scaleX(1.0101);z-index:30;">Activate Windows</span>
<span class="t" style="left:973.20px;top:707.00px;font-size:14.3px;color:#c9c9c9;transform:scaleX(1.0311);z-index:30;">Go to PC settings to activate Windows.</span>
<span class="t" style="left:755.95px;top:379.60px;font-size:73px;color:#17699e;transform:scaleX(1.2382);z-index:1;font-family:'Liberation Serif',serif;-webkit-text-stroke:0.4px currentColor;">Gate</span>
<span class="t" style="left:798.97px;top:438.80px;font-size:73px;color:#ff0808;transform:scaleX(1.2395);z-index:1;font-family:'Liberation Serif',serif;-webkit-text-stroke:0.4px currentColor;">Care</span>

</body></html>
